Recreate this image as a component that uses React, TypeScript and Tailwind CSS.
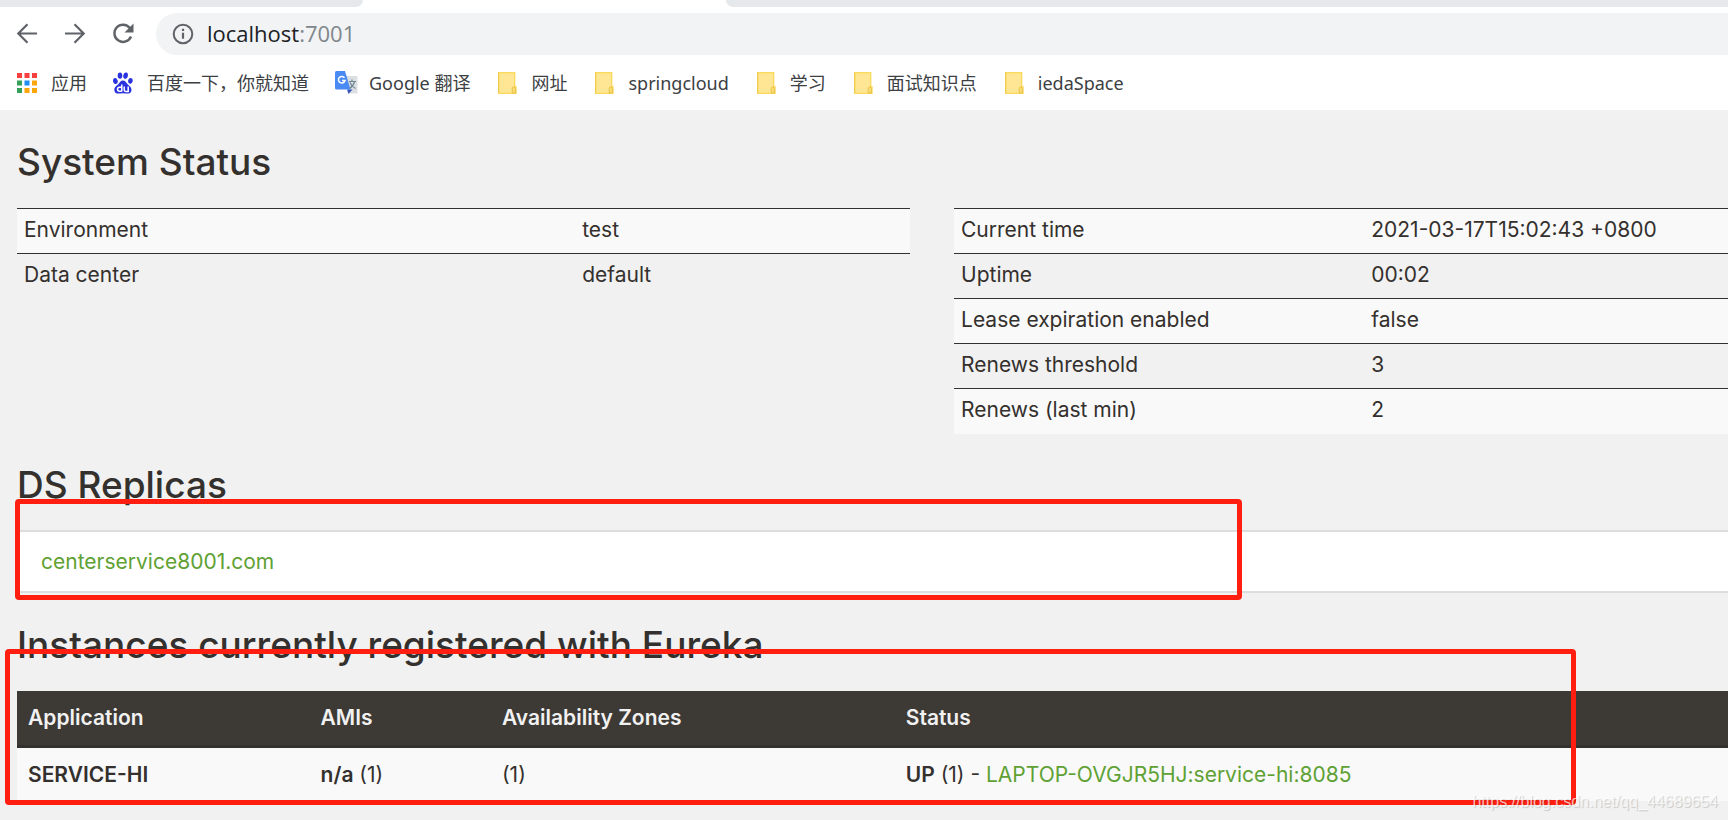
import React from "react";

const bookmarkFont = "font-['Noto_Sans','Noto_Sans_CJK_SC',sans-serif]";

const systemInfo = [
  ["Environment", "test"],
  ["Data center", "default"],
];

const runtimeInfo = [
  ["Current time", "2021-03-17T15:02:43 +0800"],
  ["Uptime", "00:02"],
  ["Lease expiration enabled", "false"],
  ["Renews threshold", "3"],
  ["Renews (last min)", "2"],
];

function AppsIcon() {
  const colors = [
    "#f93e3e", "#f93e3e", "#f93e3e",
    "#34a058", "#1e8cf5", "#fba60a",
    "#34a058", "#fba60a", "#fba60a",
  ];
  return (
    <svg width="20" height="20" viewBox="0 0 20 20" aria-hidden="true">
      {colors.map((color, i) => (
        <rect key={i} x={(i % 3) * 7.5} y={Math.floor(i / 3) * 7.5} width="5" height="5" fill={color} />
      ))}
    </svg>
  );
}

function BaiduIcon() {
  return (
    <svg width="20" height="22" viewBox="0 0 20 22" aria-hidden="true">
      <g fill="#2a32e0">
        <ellipse cx="2.4" cy="9" rx="2.3" ry="3" transform="rotate(-12 2.4 9)" />
        <ellipse cx="7" cy="3.6" rx="2.3" ry="3.2" />
        <ellipse cx="12.6" cy="3.6" rx="2.3" ry="3.2" transform="rotate(10 12.6 3.6)" />
        <ellipse cx="17.4" cy="8.8" rx="2.3" ry="2.9" transform="rotate(8 17.4 8.8)" />
        <path d="M9.9 8.6c2.2 0 2.9 1.6 4.3 3.1 1.7 1.8 4.3 3.2 4.3 6 0 2.5-1.7 3.9-4 3.9-1.7 0-2.9-.4-4.6-.4s-2.9.4-4.6.4c-2.3 0-4-1.4-4-3.9 0-2.8 2.7-4.2 4.4-6 1.4-1.5 2-3.1 4.2-3.1z" />
      </g>
      <g fill="none" stroke="#fff" strokeWidth="1.5">
        <path d="M8.8 12.6v7M8.8 15.2H6.6a2 2 0 0 0 0 4.1h2.2" />
        <path d="M11.2 14.6v3.4q0 1.4 1.4 1.4h2.6v-4.8" />
      </g>
    </svg>
  );
}

function TranslateIcon() {
  return (
    <svg className="overflow-visible" width="20" height="23" viewBox="0 0 20 23" aria-hidden="true">
      <path d="M9 5h12.5q1 0 1 1v15.5q0 1-1 1H14z" fill="#dcdfe1" />
      <path d="M12 18.5h5.5l-4 4.5z" fill="#3453b8" />
      <path d="M1.5 0H10l5.5 18.5h-14Q0 18.5 0 17V1.5Q0 0 1.5 0z" fill="#4a8af4" />
      <path d="M9.5 6.8A3.3 3.3 0 1 0 10 9.5H7" fill="none" stroke="#fff" strokeWidth="1.5" />
      <path d="M14 10.5h7M17 8.5v2M19.5 10.5q-1 4.5-5 7M15 11.5q1.5 4 5.5 6" fill="none" stroke="#6f8790" strokeWidth="1.2" />
    </svg>
  );
}

function FolderIcon() {
  return (
    <svg width="21" height="22" viewBox="-2 0 21 22" aria-hidden="true">
      <path d="M.7.7h16v14h1.3v6.6H.7z" fill="#ffe694" stroke="#fbd95b" strokeWidth="1.3" />
      <path d="M.6.5v20.800" stroke="#edc84c" strokeWidth="1" />
      <path d="M14.2 21v-4.500q0-1.600 1.600-1.600t1.600 1.600V21z" fill="#fbdd70" stroke="#e8c14a" />
    </svg>
  );
}

function BrowserBar() {
  return (
    <header className="bg-white">
      <div className="flex justify-between">
        <div className="h-[7px] w-[21%] rounded-br-lg bg-[#e5e9ec]" />
        <div className="h-[7px] w-[58%] rounded-bl-lg bg-[#e5e9ec]" />
      </div>
      <div className="mt-1.5 flex h-[42px] items-center">
        <nav className="flex w-[156px] shrink-0 items-center gap-6 pl-[15px] text-[#5f6368]">
          <button type="button" aria-label="Back">
            <svg width="24" height="24" viewBox="0 0 24 24" fill="none" stroke="currentColor" strokeWidth="2.2">
              <path d="M22 11.500H3.500M12.500 2.300L3.300 11.500l9.200 9.200" />
            </svg>
          </button>
          <button type="button" aria-label="Forward">
            <svg width="24" height="24" viewBox="0 0 24 24" fill="none" stroke="currentColor" strokeWidth="2.2">
              <path d="M2 11.500h18.500M11.500 2.300l9.200 9.200-9.200 9.200" />
            </svg>
          </button>
          <button type="button" aria-label="Reload">
            <svg width="24" height="24" viewBox="0 0 24 24" fill="none" stroke="currentColor" strokeWidth="2.4">
              <path d="M18.800 6A8.600 8.600 0 1 0 20 14.500" />
              <path d="M22.500 1.500v9h-9z" fill="currentColor" stroke="none" />
            </svg>
          </button>
        </nav>
        <div className="flex h-full flex-1 items-center gap-[13px] rounded-l-full bg-[#f1f3f4] pl-4">
          <svg width="22" height="22" viewBox="0 0 22 22" fill="none" stroke="#5f6368" strokeWidth="2" aria-hidden="true">
            <circle cx="11" cy="11" r="9.3" />
            <path d="M11 9.800v6M11 5.800v2.200" strokeWidth="2.2" />
          </svg>
          <div className="pb-0.5 font-['Open_Sans',sans-serif] text-[22px] leading-8 text-[#202124]">
            localhost<span className="text-[#80868b]">:7001</span>
          </div>
        </div>
      </div>
      <nav className={`flex h-[55px] items-center gap-[26px] pl-[17px] text-lg text-[#3c4043] ${bookmarkFont}`}>
        <Bookmark icon={<AppsIcon />} label="应用" />
        <Bookmark icon={<BaiduIcon />} label="百度一下，你就知道" />
        <Bookmark icon={<TranslateIcon />} label="Google 翻译" />
        <Bookmark icon={<FolderIcon />} label="网址" />
        <Bookmark icon={<FolderIcon />} label="springcloud" />
        <Bookmark icon={<FolderIcon />} label="学习" />
        <Bookmark icon={<FolderIcon />} label="面试知识点" />
        <Bookmark icon={<FolderIcon />} label="iedaSpace" />
      </nav>
    </header>
  );
}

function Bookmark({ icon, label }: { icon: React.ReactNode; label: string }) {
  return (
    <a href="#" className="flex items-center gap-[14px] whitespace-nowrap">
      {icon}
      <span>{label}</span>
    </a>
  );
}

function Heading({ children }: { children: React.ReactNode }) {
  return (
    <h1 className="font-['Inter',sans-serif] text-[37px] leading-10 font-medium text-[#34302d]">
      {children}
    </h1>
  );
}

function InfoTable({ rows, labelWidth }: { rows: string[][]; labelWidth: string }) {
  return (
    <table className="w-full table-fixed self-start">
      <tbody>
        {rows.map(([label, value]) => (
          <tr key={label} className="h-[45px] border-t border-[#34302d] odd:bg-[#f9f9f9]">
            <th scope="row" className={`px-[7px] pb-1 text-left font-normal ${labelWidth}`}>{label}</th>
            <td className="px-[7px] pb-1">{value}</td>
          </tr>
        ))}
      </tbody>
    </table>
  );
}

export default function App() {
  return (
    <div className="relative min-h-screen overflow-hidden bg-[#f1f1f1]">
      <BrowserBar />
      <main className="pl-[17px] font-['Inter',sans-serif] text-[21px] leading-[27px] text-[#34302d]">
        <section className="pt-8">
          <Heading>System Status</Heading>
          <div className="mt-[26px] grid grid-cols-[15fr_13fr] gap-11">
            <InfoTable rows={systemInfo} labelWidth="w-[62.5%]" />
            <InfoTable rows={runtimeInfo} labelWidth="w-[53%]" />
          </div>
        </section>

        <section className="pt-[31px]">
          <Heading>DS Replicas</Heading>
          <ul className="mt-[25px] border-y-2 border-[#dddddd] bg-white px-6 py-4">
            <li>
              <a href="#" className="text-[#5fa134]">centerservice8001.com</a>
            </li>
          </ul>
        </section>

        <section className="pt-8">
          <Heading>Instances currently registered with Eureka</Heading>
          <table className="mt-[26px] w-full table-fixed text-left">
            <thead>
              <tr className="h-14 border-b-[3px] border-[#34302d] bg-[#3d3935] text-[#f1f1f1]">
                <th className="w-[17.1%] px-[11px] font-semibold">Application</th>
                <th className="w-[10.6%] px-[11px] font-semibold">AMIs</th>
                <th className="w-[23.6%] px-[11px] font-semibold">Availability Zones</th>
                <th className="px-[11px] font-semibold">Status</th>
              </tr>
            </thead>
            <tbody>
              <tr className="h-[54px] bg-[#f9f9f9]">
                <td className="px-[11px] font-semibold">SERVICE-HI</td>
                <td className="px-[11px]"><b className="font-semibold">n/a</b> (1)</td>
                <td className="px-[11px]">(1)</td>
                <td className="px-[11px]">
                  <b className="font-semibold">UP</b> (1) -{" "}
                  <a href="#" className="text-[#5fa134]">LAPTOP-OVGJR5HJ:service-hi:8085</a>
                </td>
              </tr>
            </tbody>
          </table>
        </section>
      </main>

      {/* highlight frames drawn over the page */}
      <div className="pointer-events-none absolute top-[499px] left-[15px] h-[101px] w-[71%] rounded border-[5px] border-[#ff1e10]" />
      <div className="pointer-events-none absolute top-[649px] left-[5px] h-[156px] w-10/11 rounded border-[5px] border-[#ff1e10]" />
      <div className="absolute right-2.5 bottom-2 font-['Liberation_Sans',sans-serif] text-base leading-5 text-white/70 [text-shadow:1px_1px_1px_rgba(0,0,0,0.18)]">
        https://blog.csdn.net/qq_44689654
      </div>
    </div>
  );
}
